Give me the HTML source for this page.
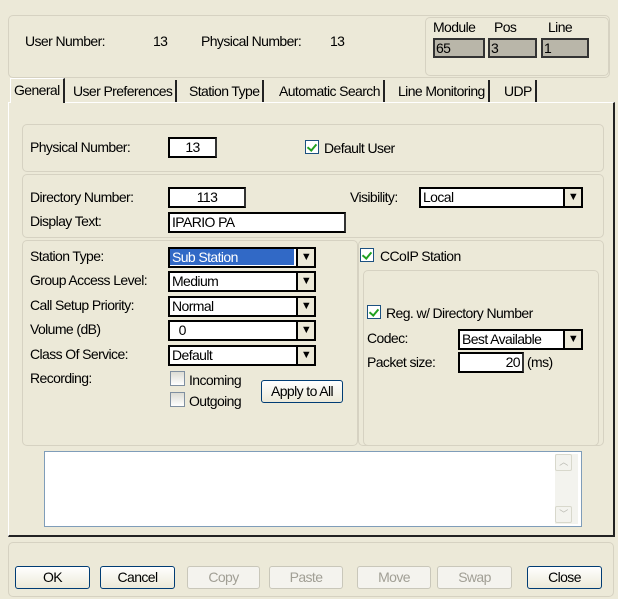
<!DOCTYPE html>
<html><head><style>
*{box-sizing:border-box}
body{margin:0;width:618px;height:599px;background:#ece9d8;font-family:"Liberation Sans",sans-serif;font-size:14px;color:#000;position:relative;overflow:hidden;letter-spacing:-0.6px}
.a{position:absolute;white-space:nowrap}
.grp{position:absolute;border:1px solid #d6d2c2;border-radius:5px}
.box{position:absolute;background:#fff;border:2px solid #000;border-right-color:#333;padding:0 4px;line-height:16px}
.sel{position:absolute;background:#fff;border:2px solid #000;line-height:16px;padding-left:2px}
.sel .ar{position:absolute;right:0;top:0;bottom:0;width:18px;border-left:2px solid #000;background:#ece9d8;text-align:center;font-size:11px;line-height:16px}
.cb{position:absolute;width:14px;height:14px;border:1px solid #1c5180;background:#fff}
.cb.on:after{content:"";position:absolute;left:3px;top:1px;width:4px;height:7px;border:solid #21a121;border-width:0 2px 2px 0;transform:rotate(40deg)}
.cbx{position:absolute;width:15px;height:15px;border:1px solid #7f8fa0;background:linear-gradient(#dcdcd4,#fff)}
.btn{position:absolute;height:23px;border:1px solid #003c74;border-radius:3px;background:linear-gradient(#fff,#ece9d8);text-align:center;line-height:21px}
.btn.dis{border-color:#c9c7ba;color:#a19f95;background:#f4f3ee}
.tab{position:absolute;top:80px;height:22px;line-height:22px;border-right:2px solid #222;padding:0 3px}
</style></head><body>
<div class="grp" style="left:8px;top:15px;width:602px;height:63px"></div>
<div class="grp" style="left:425px;top:17px;width:184px;height:59px"></div>
<div class="a" style="left:25px;top:33px">User Number:</div>
<div class="a" style="left:153px;top:33px">13</div>
<div class="a" style="left:201px;top:33px">Physical Number:</div>
<div class="a" style="left:330px;top:33px">13</div>
<div class="a" style="left:433px;top:19px">Module</div>
<div class="a" style="left:494px;top:19px">Pos</div>
<div class="a" style="left:548px;top:19px">Line</div>
<div class="a" style="left:433px;top:38px;width:52px;height:20px;background:#b9b6a9;border:2px solid #333;line-height:16px;padding-left:1px">65</div>
<div class="a" style="left:488px;top:38px;width:49px;height:20px;background:#b9b6a9;border:2px solid #333;line-height:16px;padding-left:1px">3</div>
<div class="a" style="left:541px;top:38px;width:48px;height:20px;background:#b9b6a9;border:2px solid #333;line-height:16px;padding-left:1px">1</div>

<div class="a" style="left:8px;top:102px;width:607px;height:435px;border-right:2px solid #222;border-bottom:2px solid #222;border-left:1px solid #fff;border-top:1px solid #fff"></div>
<div class="tab" style="left:10px;top:78px;height:25px;background:#ece9d8;border-left:1px solid #fff;border-top:1px solid #fff">General</div>
<div class="tab" style="left:70px">User Preferences</div>
<div class="tab" style="left:186px">Station Type</div>
<div class="tab" style="left:276px">Automatic Search</div>
<div class="tab" style="left:395px">Line Monitoring</div>
<div class="tab" style="left:501px">UDP</div>

<div class="grp" style="left:22px;top:124px;width:582px;height:48px"></div>
<div class="a" style="left:30px;top:139px">Physical Number:</div>
<div class="box" style="left:168px;top:137px;width:49px;height:21px;text-align:center">13</div>
<div class="cb on" style="left:305px;top:140px"></div>
<div class="a" style="left:324px;top:140px">Default User</div>

<div class="grp" style="left:22px;top:174px;width:582px;height:64px"></div>
<div class="a" style="left:30px;top:189px">Directory Number:</div>
<div class="box" style="left:168px;top:187px;width:78px;height:21px;text-align:center">113</div>
<div class="a" style="left:350px;top:189px">Visibility:</div>
<div class="sel" style="left:419px;top:187px;width:164px;height:21px">Local<div class="ar">▼</div></div>
<div class="a" style="left:30px;top:213px">Display Text:</div>
<div class="box" style="left:168px;top:212px;width:178px;height:21px;padding-left:2px">IPARIO PA</div>

<div class="grp" style="left:22px;top:240px;width:336px;height:206px"></div>
<div class="grp" style="left:358px;top:240px;width:246px;height:206px"></div>
<div class="grp" style="left:363px;top:270px;width:236px;height:176px"></div>
<div class="a" style="left:30px;top:248px">Station Type:</div>
<div class="a" style="left:30px;top:272px">Group Access Level:</div>
<div class="a" style="left:30px;top:297px">Call Setup Priority:</div>
<div class="a" style="left:30px;top:321px">Volume (dB)</div>
<div class="a" style="left:30px;top:346px">Class Of Service:</div>
<div class="a" style="left:30px;top:370px">Recording:</div>
<div class="sel" style="left:168px;top:247px;width:148px;height:21px;color:#fff"><span style="background:#3169c6;display:inline-block;width:124px;margin-left:-2px;padding-left:2px">Sub Station</span><div class="ar" style="color:#000">▼</div></div>
<div class="sel" style="left:168px;top:271px;width:148px;height:21px">Medium<div class="ar">▼</div></div>
<div class="sel" style="left:168px;top:296px;width:148px;height:21px">Normal<div class="ar">▼</div></div>
<div class="sel" style="left:168px;top:320px;width:148px;height:21px">&nbsp;&nbsp;0<div class="ar">▼</div></div>
<div class="sel" style="left:168px;top:345px;width:148px;height:21px">Default<div class="ar">▼</div></div>
<div class="cbx" style="left:170px;top:371px"></div>
<div class="a" style="left:189px;top:372px">Incoming</div>
<div class="cbx" style="left:170px;top:392px"></div>
<div class="a" style="left:189px;top:393px">Outgoing</div>
<div class="btn" style="left:261px;top:380px;width:82px">Apply to All</div>

<div class="cb on" style="left:360px;top:248px"></div>
<div class="a" style="left:380px;top:248px">CCoIP Station</div>
<div class="cb on" style="left:367px;top:305px"></div>
<div class="a" style="left:386px;top:305px">Reg. w/ Directory Number</div>
<div class="a" style="left:367px;top:330px">Codec:</div>
<div class="sel" style="left:458px;top:329px;width:125px;height:21px">Best Available<div class="ar">▼</div></div>
<div class="a" style="left:367px;top:354px">Packet size:</div>
<div class="box" style="left:458px;top:352px;width:66px;height:21px;text-align:right;padding-right:2px">20</div>
<div class="a" style="left:527px;top:354px">(ms)</div>

<div class="a" style="left:44px;top:451px;width:538px;height:76px;background:#fff;border:1px solid #7f9db9"></div>
<div class="a" style="left:555px;top:454px;width:23px;height:70px;background:#f3f3ee"></div>
<div class="a" style="left:555px;top:454px;width:17px;height:17px;border:1px solid #d8d8cc;border-radius:2px;color:#b8b8b0;font-size:9px;text-align:center;line-height:15px">︿</div>
<div class="a" style="left:555px;top:506px;width:17px;height:17px;border:1px solid #d8d8cc;border-radius:2px;color:#b8b8b0;font-size:9px;text-align:center;line-height:15px">﹀</div>

<div class="grp" style="left:8px;top:542px;width:606px;height:55px"></div>
<div class="btn" style="left:15px;top:566px;width:75px">OK</div>
<div class="btn" style="left:100px;top:566px;width:75px">Cancel</div>
<div class="btn dis" style="left:187px;top:566px;width:73px">Copy</div>
<div class="btn dis" style="left:269px;top:566px;width:74px">Paste</div>
<div class="btn dis" style="left:357px;top:566px;width:74px">Move</div>
<div class="btn dis" style="left:437px;top:566px;width:75px">Swap</div>
<div class="btn" style="left:527px;top:566px;width:75px">Close</div>
</body></html>
